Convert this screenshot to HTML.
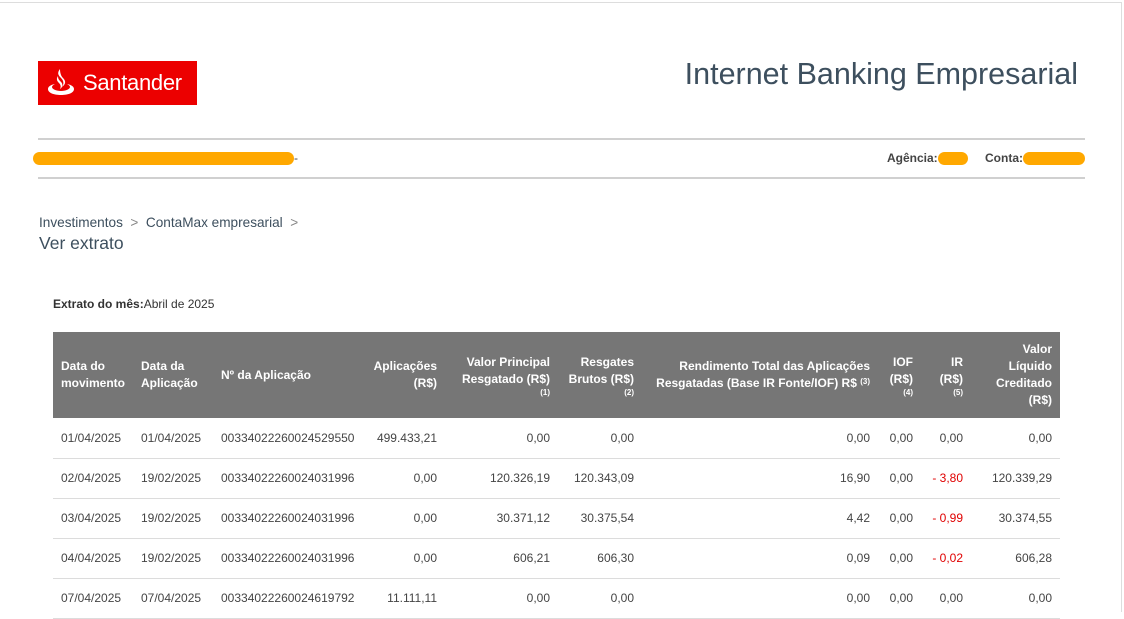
<!DOCTYPE html>
<html><head><meta charset="utf-8"><style>
*{margin:0;padding:0;box-sizing:border-box}
body{width:1124px;height:604px;overflow:hidden;background:#fff;font-family:"Liberation Sans",Arial,sans-serif;position:relative;color:#444}
.abs{position:absolute}
.frame{position:absolute;left:0;top:2px;width:1122px;height:610px;border-top:1px solid #ddd;border-right:1px solid #ddd}
.line{position:absolute;left:38px;width:1047px;height:2px;background:#d0d0d0}
.bar{position:absolute;background:#ffa800;border-radius:7px;height:13px}
table{position:absolute;left:53px;top:332px;border-collapse:collapse;width:1007px;table-layout:fixed;font-size:12px}
th{background:#767676;color:#fff;font-weight:bold;height:86px;line-height:17px;padding:0 8px;text-align:right;vertical-align:middle}
th.l{text-align:left}
th sup{font-size:8px;vertical-align:top;position:relative;top:-2px}
th .n{display:block;font-size:8px;line-height:9px}
td{height:40px;border-bottom:1px solid #dcdcdc;padding:0 8px;text-align:right;color:#444;white-space:nowrap}
td.l{text-align:left}
.r{color:#e00000}
</style></head><body>
<div class="frame"></div>
<div class="abs" style="left:38px;top:61px;width:159px;height:44px;background:#ec0000;color:#fff;font-size:22px;line-height:44px;padding-left:45px;letter-spacing:-0.3px">Santander</div>
<svg class="abs" style="left:46px;top:67px" width="30" height="32" viewBox="0 0 30 32"><path fill="#fff" d="M14 2c-3 4-2 6 1 9 3 3 3 6 1 9 4-3 4-6 1-9-2-2-3-5-3-9z M12 9c-2 3-1 5 1 7 2 2 2 4 1 6 3-2 3-5 1-7-2-2-3-3-3-6z M9 17C4 18 2 20 2 22c0 4 6 6 13 6s13-2 13-6c0-2-2-4-7-5 2 1 3 2 3 3 0 2-4 4-9 4s-9-2-9-4c0-1 1-2 3-3z"/></svg>
<div class="abs" style="right:46px;top:57px;font-size:30.5px;color:#3d4f5e">Internet Banking Empresarial</div>
<div class="line" style="top:138px"></div>
<div class="line" style="top:177px"></div>
<div class="bar" style="left:33px;top:152px;width:261px"></div>
<div class="abs" style="left:294px;top:151px;font-size:12px;color:#444">-</div>
<div class="abs" style="left:887px;top:151px;font-size:12px;font-weight:bold;color:#444">Agência:</div>
<div class="bar" style="left:938px;top:152px;width:30px"></div>
<div class="abs" style="left:985px;top:151px;font-size:12px;font-weight:bold;color:#444">Conta:</div>
<div class="bar" style="left:1023px;top:152px;width:62px"></div>
<div class="abs" style="left:39px;top:215px;font-size:13.6px;color:#3d4f5e">Investimentos <span style="color:#888">&nbsp;&gt;&nbsp;</span> ContaMax empresarial <span style="color:#888">&nbsp;&gt;</span></div>
<div class="abs" style="left:39px;top:233px;font-size:17.5px;color:#3d4f5e">Ver extrato</div>
<div class="abs" style="left:53px;top:297px;font-size:12px;color:#333"><b>Extrato do mês:</b>Abril de 2025</div>
<table>
<colgroup><col style="width:80px"><col style="width:80px"><col style="width:147px"><col style="width:85px"><col style="width:113px"><col style="width:84px"><col style="width:236px"><col style="width:43px"><col style="width:50px"><col style="width:89px"></colgroup>
<tr><th class="l">Data do movimento</th><th class="l">Data da Aplicação</th><th class="l">Nº da Aplicação</th><th>Aplicações (R$)</th><th>Valor Principal Resgatado (R$)<span class="n">(1)</span></th><th>Resgates Brutos (R$)<span class="n">(2)</span></th><th>Rendimento Total das Aplicações Resgatadas (Base IR Fonte/IOF) R$ <sup>(3)</sup></th><th>IOF (R$)<span class="n">(4)</span></th><th>IR (R$)<span class="n">(5)</span></th><th>Valor Líquido Creditado (R$)</th></tr>
<tr><td class="l">01/04/2025</td><td class="l">01/04/2025</td><td class="l">00334022260024529550</td><td>499.433,21</td><td>0,00</td><td>0,00</td><td>0,00</td><td>0,00</td><td>0,00</td><td>0,00</td></tr>
<tr><td class="l">02/04/2025</td><td class="l">19/02/2025</td><td class="l">00334022260024031996</td><td>0,00</td><td>120.326,19</td><td>120.343,09</td><td>16,90</td><td>0,00</td><td class="r">- 3,80</td><td>120.339,29</td></tr>
<tr><td class="l">03/04/2025</td><td class="l">19/02/2025</td><td class="l">00334022260024031996</td><td>0,00</td><td>30.371,12</td><td>30.375,54</td><td>4,42</td><td>0,00</td><td class="r">- 0,99</td><td>30.374,55</td></tr>
<tr><td class="l">04/04/2025</td><td class="l">19/02/2025</td><td class="l">00334022260024031996</td><td>0,00</td><td>606,21</td><td>606,30</td><td>0,09</td><td>0,00</td><td class="r">- 0,02</td><td>606,28</td></tr>
<tr><td class="l">07/04/2025</td><td class="l">07/04/2025</td><td class="l">00334022260024619792</td><td>11.111,11</td><td>0,00</td><td>0,00</td><td>0,00</td><td>0,00</td><td>0,00</td><td>0,00</td></tr>
</table>
</body></html>
